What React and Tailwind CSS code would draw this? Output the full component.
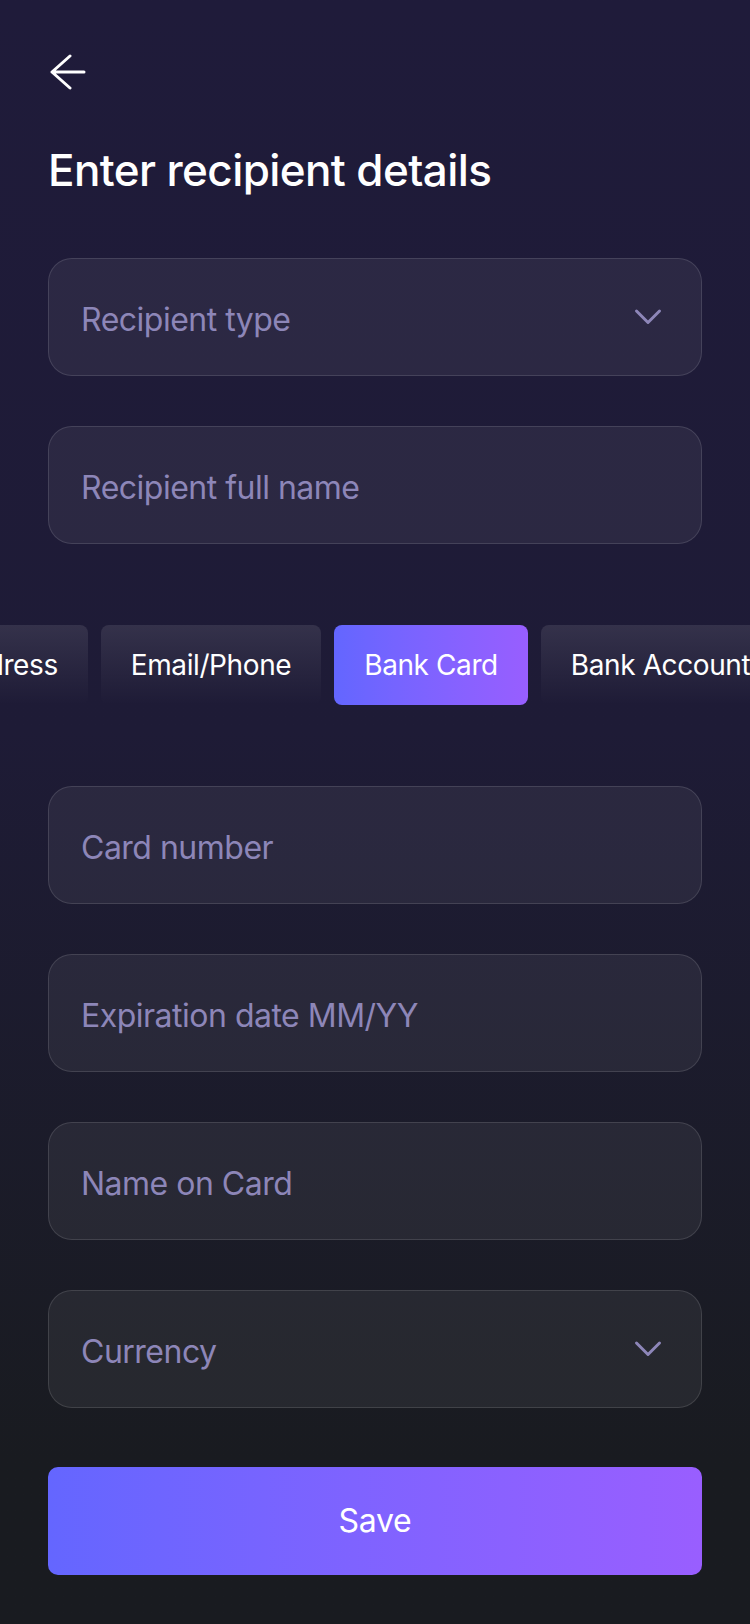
import { useLayoutEffect, useRef } from 'react'

const tabs = ['Address', 'Email/Phone', 'Bank Card', 'Bank Account', 'Crypto Wallet']

const Chevron = () => (
  <svg width="30" height="18" viewBox="0 0 30 18" fill="none" className="shrink-0">
    <path d="M3.5 3 L15 14.5 L26.5 3" stroke="#8d86b8" strokeWidth="3" strokeLinecap="round" strokeLinejoin="round" />
  </svg>
)

const Field = ({ placeholder }) => (
  <div className="h-[118px] rounded-3xl border-[1.5px] border-white/[0.12] bg-white/[0.06] flex items-center px-8 pt-[6px]">
    <input
      placeholder={placeholder}
      className="w-full bg-transparent outline-none text-[32px] tracking-[-0.5px] text-white placeholder:text-[#8d86b8]"
    />
  </div>
)

const SelectField = ({ placeholder }) => (
  <button className="h-[118px] w-full rounded-3xl border-[1.5px] border-white/[0.12] bg-white/[0.06] flex items-center justify-between pl-8 pr-[38px] text-left">
    <span className="text-[32px] tracking-[-0.5px] text-[#8d86b8] pt-[6px]">{placeholder}</span>
    <Chevron />
  </button>
)

const App = () => {
  const rowRef = useRef(null)
  const emailRef = useRef(null)

  // keep the row scrolled the same way as the screen
  useLayoutEffect(() => {
    if (rowRef.current && emailRef.current) {
      rowRef.current.scrollLeft = emailRef.current.offsetLeft - 101
    }
  }, [])

  return (
    <div className="min-h-screen w-full bg-linear-to-b from-[#1f1b3a] via-[#1e1b36] via-45% to-[#191b20] to-90% font-['Inter',sans-serif] text-white pb-12">
      <div className="px-12 pt-[54px]">
        <button className="block ml-[2px]">
          <svg width="36" height="36" viewBox="0 0 36 36" fill="none">
            <path d="M2 18 H34 M20 2 L2 18 L20 34" stroke="white" strokeWidth="3" strokeLinecap="round" strokeLinejoin="round" />
          </svg>
        </button>
      </div>

      <h1 className="px-12 mt-[58px] text-[44px] leading-[44px] font-medium tracking-[-0.6px]">Enter recipient details</h1>

      <div className="px-12 mt-[66px] flex flex-col gap-[50px]">
        <SelectField placeholder="Recipient type" />
        <Field placeholder="Recipient full name" />
      </div>

      <div ref={rowRef} className="mt-[81px] overflow-hidden">
        <div className="flex gap-[13px] w-max px-12">
          {tabs.map((t) => {
            const active = t === 'Bank Card'
            return (
              <button
                key={t}
                ref={t === 'Email/Phone' ? emailRef : null}
                className={`h-20 px-[30px] rounded-lg text-[28px] tracking-[-0.4px] whitespace-nowrap ${
                  active
                    ? 'bg-linear-to-r from-[#6366ff] to-[#985eff]'
                    : 'bg-linear-to-b from-white/[0.1] to-white/0'
                }`}
              >
                {t}
              </button>
            )
          })}
        </div>
      </div>

      <div className="px-12 mt-[81px] flex flex-col gap-[50px]">
        <Field placeholder="Card number" />
        <Field placeholder="Expiration date MM/YY" />
        <Field placeholder="Name on Card" />
        <SelectField placeholder="Currency" />
      </div>

      <div className="px-12 mt-[59px]">
        <button className="w-full h-[108px] rounded-[10px] bg-linear-to-r from-[#6466ff] to-[#995eff] text-[32px] tracking-[-0.3px]">
          Save
        </button>
      </div>
    </div>
  )
}

export default App
